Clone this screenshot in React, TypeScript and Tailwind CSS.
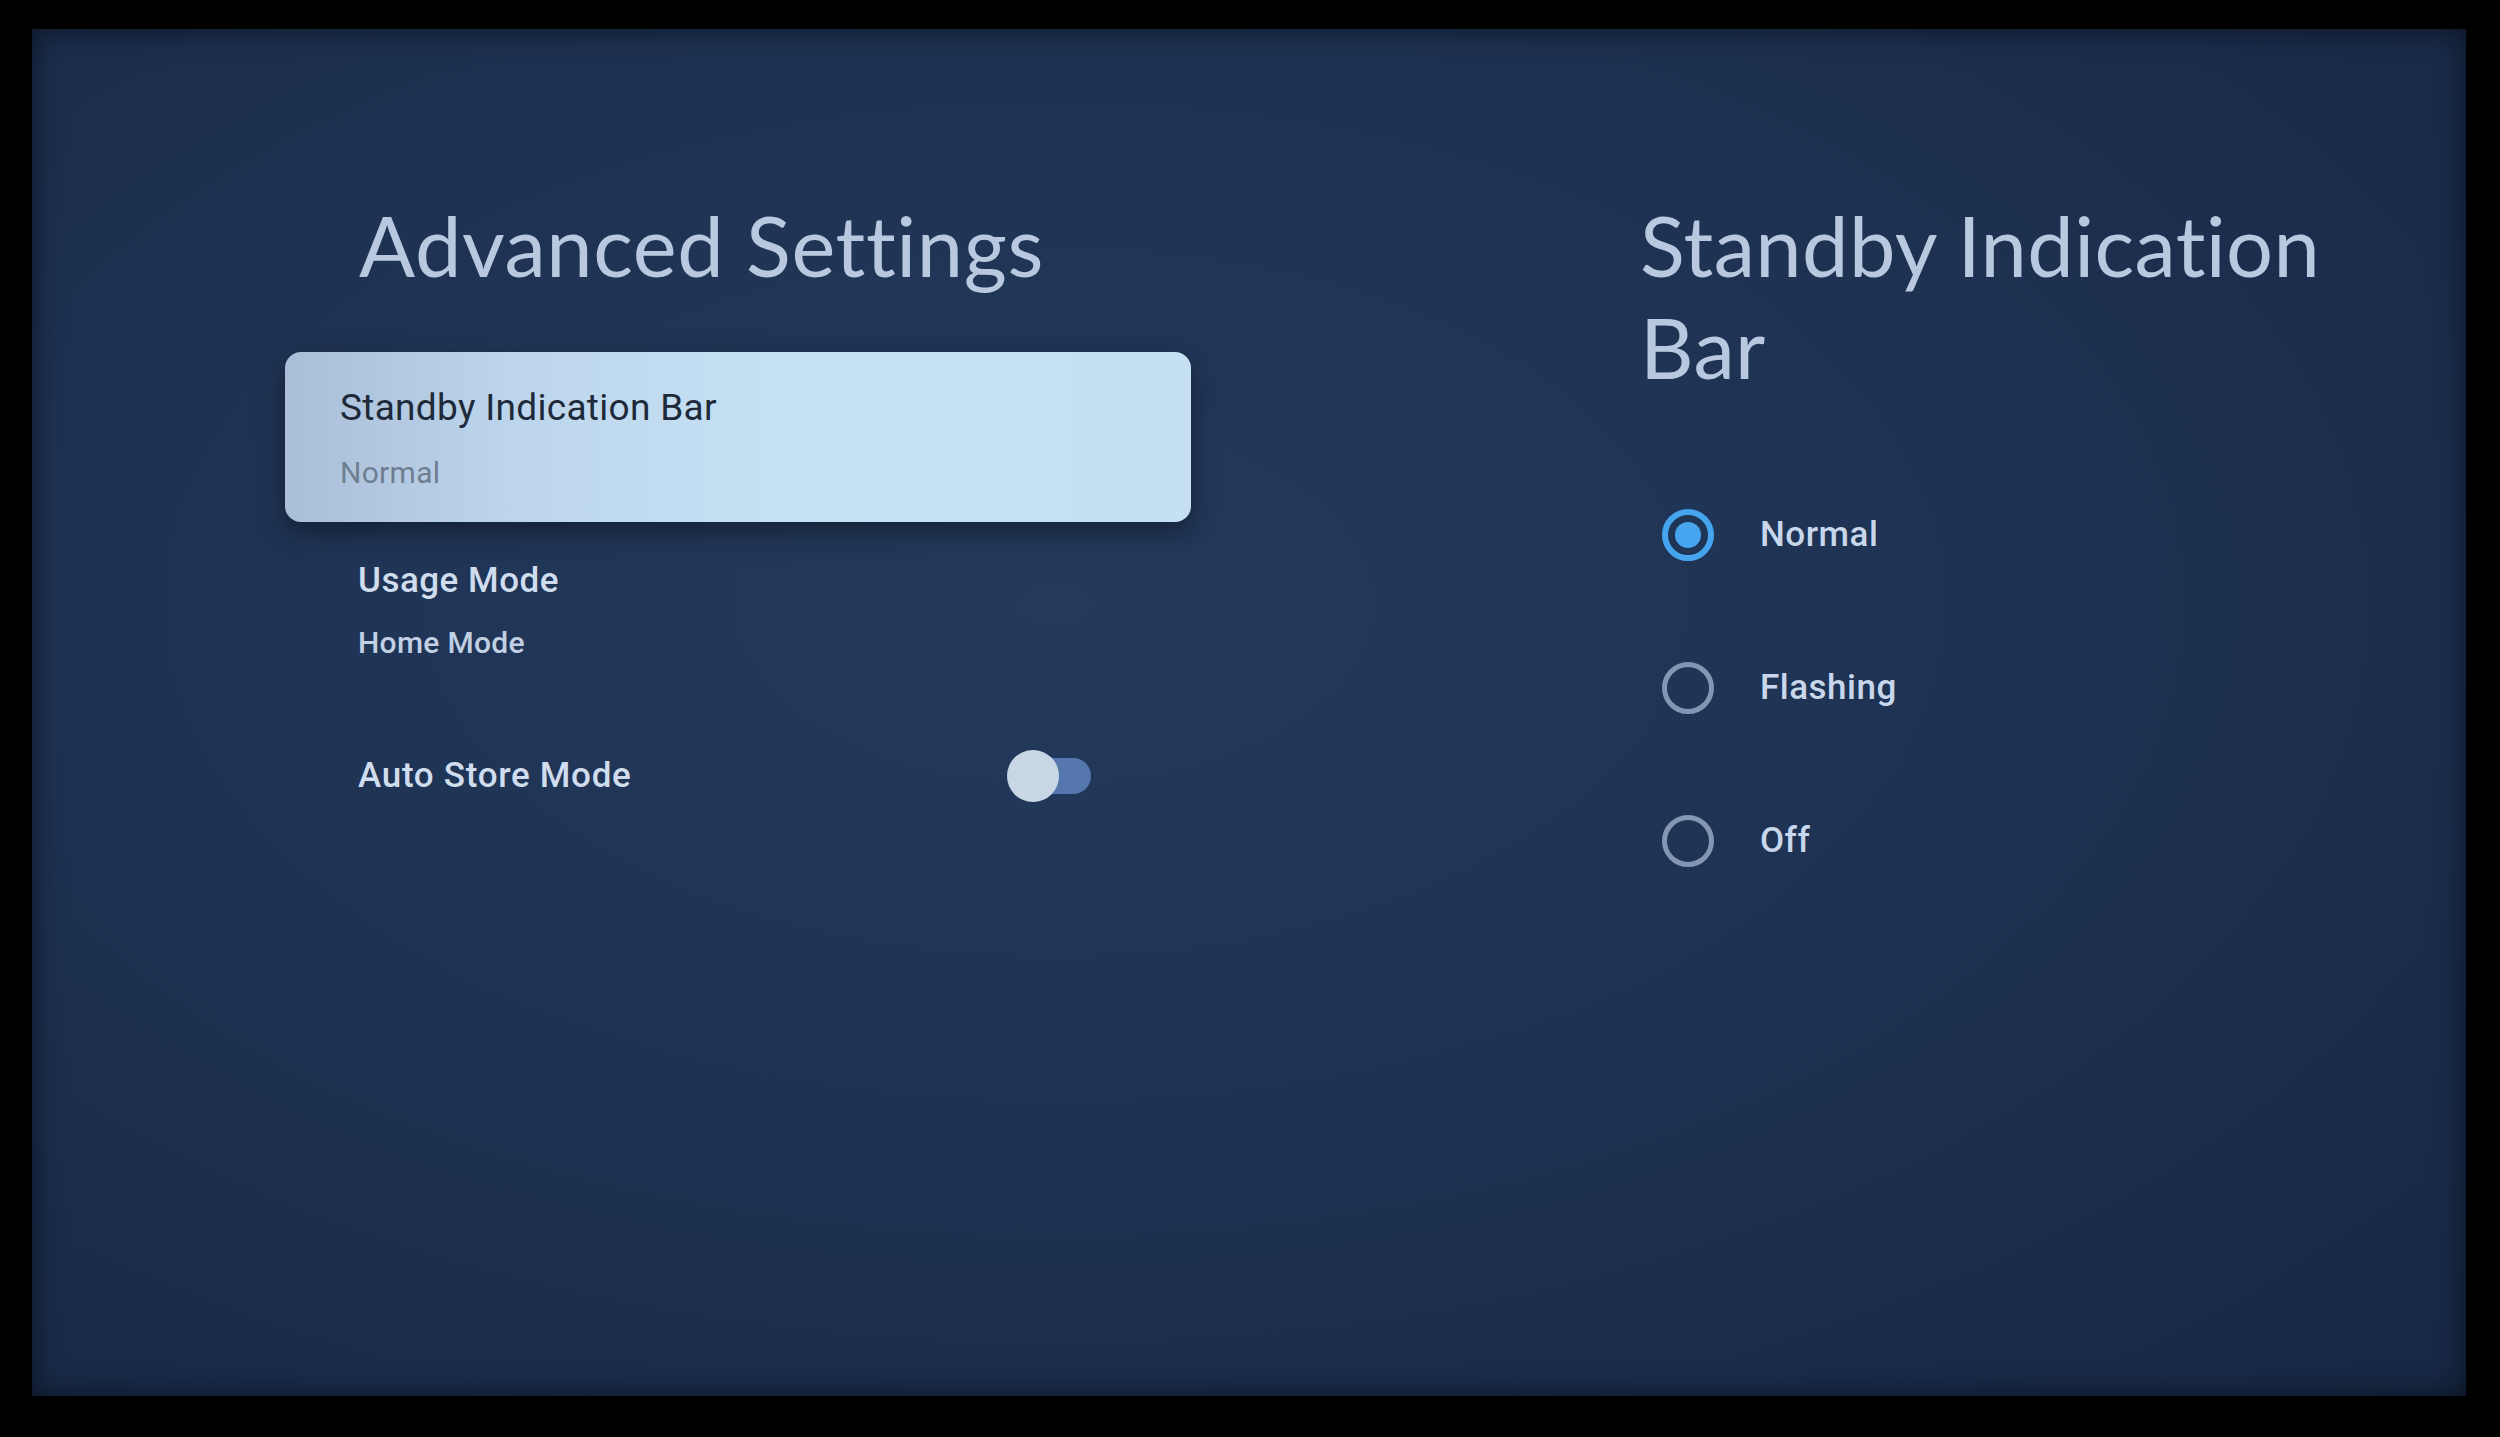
import React from "react";

function Radio({ selected }: { selected: boolean }) {
  if (selected) {
    return (
      <div className="w-[52px] h-[52px] rounded-full border-[6px] border-[#46a5ee] flex items-center justify-center">
        <div className="w-[26px] h-[26px] rounded-full bg-[#46a5ee]" />
      </div>
    );
  }
  return <div className="w-[52px] h-[52px] rounded-full border-[5px] border-[#8396b3]" />;
}

export default function App() {
  const options = [
    { label: "Normal", selected: true },
    { label: "Flashing", selected: false },
    { label: "Off", selected: false },
  ];
  return (
    <div className="w-[2500px] h-[1437px] bg-black pt-[29px] pl-[32px] pr-[34px] pb-[41px] overflow-hidden">
      <div className="w-[2434px] h-[1367px] flex bg-[radial-gradient(ellipse_at_42%_42%,#233a5c_0%,#1f3455_40%,#1a2c4b_75%,#172744_100%)] shadow-[inset_0_0_30px_rgba(0,0,0,0.55)]">
        {/* Left column */}
        <div className="w-[1159px] pl-[253px] pt-[165px] flex flex-col">
          <div className="pl-[74px] text-[83px] leading-[102px] tracking-[0.6px] text-[#b8c9df] font-['Lato',sans-serif] [font-variant-ligatures:none] whitespace-nowrap">
            Advanced Settings
          </div>
          <div className="mt-[56px] w-[906px] h-[170px] rounded-[16px] bg-[linear-gradient(90deg,#a9bed7_0%,#bcd5ec_25%,#c6e1f4_55%,#c6e0f3_100%)] shadow-[0_10px_28px_rgba(0,0,0,0.4)] pl-[55px] pt-[32px] font-['Roboto',sans-serif]">
            <div className="text-[37px] leading-[48px] tracking-[0.3px] text-[#1e2939]">Standby Indication Bar</div>
            <div className="mt-[21px] text-[30px] leading-[40px] tracking-[0.3px] text-[#6f7e91]">Normal</div>
          </div>
          <div className="pl-[73px] font-['Roboto',sans-serif]">
            <div className="mt-[37px] text-[35px] leading-[44px] tracking-[0.5px] font-medium text-[#d0ddee]">Usage Mode</div>
            <div className="mt-[20px] text-[30px] leading-[40px] tracking-[0.3px] font-medium text-[#c2d0e3]">Home Mode</div>
            <div className="mt-[87px] h-[52px] flex items-center justify-between pr-[100px]">
              <div className="text-[35px] leading-[44px] tracking-[0.7px] font-medium text-[#d0ddee]">Auto Store Mode</div>
              <div className="relative w-[84px] h-[52px]">
                <div className="absolute right-0 top-[8px] w-[70px] h-[36px] rounded-full bg-[#5677ad]" />
                <div className="absolute left-0 top-0 w-[52px] h-[52px] rounded-full bg-[#c9d6e6]" />
              </div>
            </div>
          </div>
        </div>
        {/* Right column */}
        <div className="ml-[449px] pt-[165px] flex flex-col">
          <div className="w-[760px] text-[83px] leading-[102px] tracking-[0.4px] text-[#b8c9df] font-['Lato',sans-serif] [font-variant-ligatures:none]">
            Standby Indication Bar
          </div>
          <div className="mt-[60px] flex flex-col">
            {options.map((o) => (
              <div key={o.label} className="h-[153px] flex items-center pl-[22px]">
                <Radio selected={o.selected} />
                <div className="ml-[46px] text-[35px] leading-[44px] tracking-[0.5px] font-medium text-[#c8d7eb] font-['Roboto',sans-serif]">
                  {o.label}
                </div>
              </div>
            ))}
          </div>
        </div>
      </div>
    </div>
  );
}
